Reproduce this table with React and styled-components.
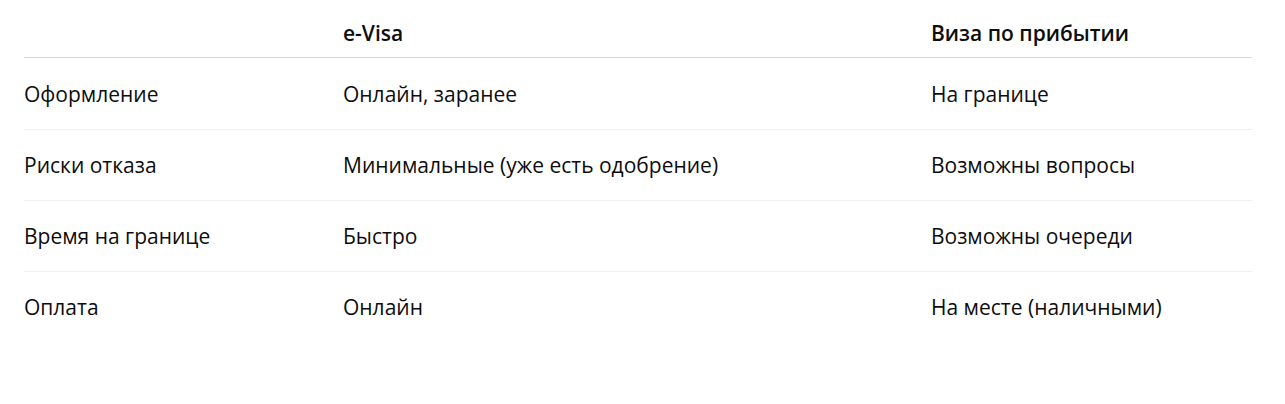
import React from 'react';
import styled, { createGlobalStyle } from 'styled-components'

const GlobalStyle = createGlobalStyle`
    body {
        margin: 0;
        background: #ffffff;
        font-family: "Open Sans", "Noto Sans", sans-serif;
        color: #0d0d0d;
    }
`

const Wrapper = styled.div`
    padding: 9px 33px 0 24px;
`

const Tabela = styled.table`
    width: 100%;
    border-collapse: collapse;
    table-layout: fixed;
    font-size: 21px;
`

const Coluna = styled.col`
    width: ${(props) => props.largura};
`

const CelulaTitulo = styled.th`
    text-align: left;
    font-weight: 600;
    height: 48px;
    padding: 0;
    vertical-align: middle;
    border-bottom: 1px solid #d9d9d9;
`

const Linha = styled.tr`
    border-bottom: 1px solid ${(props) => (props.ultima ? 'transparent' : '#f0f0f0')};
`

const Celula = styled.td`
    height: ${(props) => (props.primeira ? '71px' : '70px')};
    padding: 0;
    vertical-align: middle;
`

const linhas = [
    ['Оформление', 'Онлайн, заранее', 'На границе'],
    ['Риски отказа', 'Минимальные (уже есть одобрение)', 'Возможны вопросы'],
    ['Время на границе', 'Быстро', 'Возможны очереди'],
    ['Оплата', 'Онлайн', 'На месте (наличными)'],
]

export default function App() {
    return (
        <Wrapper>
            <GlobalStyle />
            <Tabela>
                <colgroup>
                    <Coluna largura="319px" />
                    <Coluna largura="588px" />
                    <Coluna largura="auto" />
                </colgroup>
                <thead>
                    <tr>
                        <CelulaTitulo></CelulaTitulo>
                        <CelulaTitulo>e-Visa</CelulaTitulo>
                        <CelulaTitulo>Виза по прибытии</CelulaTitulo>
                    </tr>
                </thead>
                <tbody>
                    {linhas.map((linha, i) => (
                        <Linha key={linha[0]} ultima={i === linhas.length - 1}>
                            {linha.map((texto) => (
                                <Celula key={texto} primeira={i === 0}>{texto}</Celula>
                            ))}
                        </Linha>
                    ))}
                </tbody>
            </Tabela>
        </Wrapper>
    )
}
